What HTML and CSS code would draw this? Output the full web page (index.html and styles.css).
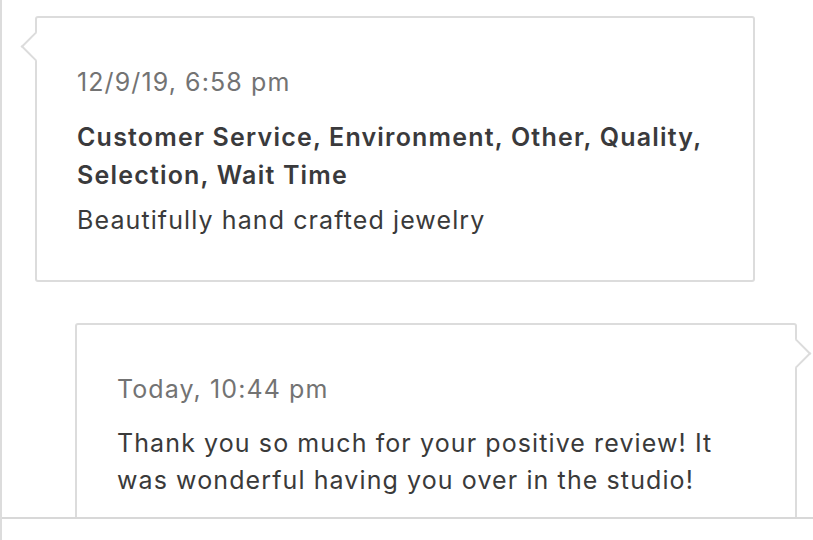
FILE: index.html
```html
<!DOCTYPE html>
<html>
<head>
<meta charset="utf-8">
<link rel="stylesheet" href="styles.css">
</head>
<body>
<div class="page">
  <div class="thread">
    <div class="card card-in">
      <div class="stamp">12/9/19, 6:58 pm</div>
      <div class="tags">Customer Service, Environment, Other, Quality, Selection, Wait Time</div>
      <div class="text">Beautifully hand crafted jewelry</div>
    </div>
    <div class="card card-out">
      <div class="stamp">Today, 10:44 pm</div>
      <div class="text">Thank you so much for your positive review! It was wonderful having you over in the studio!</div>
    </div>
  </div>
  <div class="composer"></div>
</div>
</body>
</html>
```

FILE: styles.css
```css
html, body {
  margin: 0;
  padding: 0;
  background: #fff;
}
body {
  font-family: "Inter", "Liberation Sans", sans-serif;
}
.page {
  width: 813px;
  height: 540px;
  border-left: 2px solid #dcdcdc;
  box-sizing: border-box;
  display: flex;
  flex-direction: column;
}
.thread {
  height: 519px;
  box-sizing: border-box;
  border-bottom: 2px solid #d8d8d8;
  overflow: hidden;
  padding: 16px 0 0 33px;
  display: flex;
  flex-direction: column;
  gap: 41px;
}
.composer {
  flex: 1;
}
.card {
  position: relative;
  border: 2px solid #dcdcdc;
  border-radius: 3px;
  background: #fff;
  width: 720px;
  box-sizing: border-box;
  padding: 45px 40px 41px 40px;
  flex: none;
}
.card-out {
  margin-left: 40px;
  width: 722px;
  padding-bottom: 60px;
}
.card::before {
  content: "";
  position: absolute;
  top: 18px;
  width: 19px;
  height: 19px;
  background: #fff;
  transform: rotate(45deg);
}
.card-in::before {
  left: -12px;
  border-left: 2px solid #dcdcdc;
  border-bottom: 2px solid #dcdcdc;
}
.card-out::before {
  right: -12px;
  border-top: 2px solid #dcdcdc;
  border-right: 2px solid #dcdcdc;
}
.stamp,
.tags,
.text {
  font-size: 25px;
  letter-spacing: 1.1px;
}
.stamp {
  line-height: 38px;
  color: #737373;
  margin-bottom: 17px;
}
.tags {
  line-height: 38px;
  font-weight: 600;
  letter-spacing: 1.2px;
  color: #3a3a3c;
  margin-bottom: 8px;
}
.text {
  line-height: 37px;
  color: #3a3a3a;
}
```
